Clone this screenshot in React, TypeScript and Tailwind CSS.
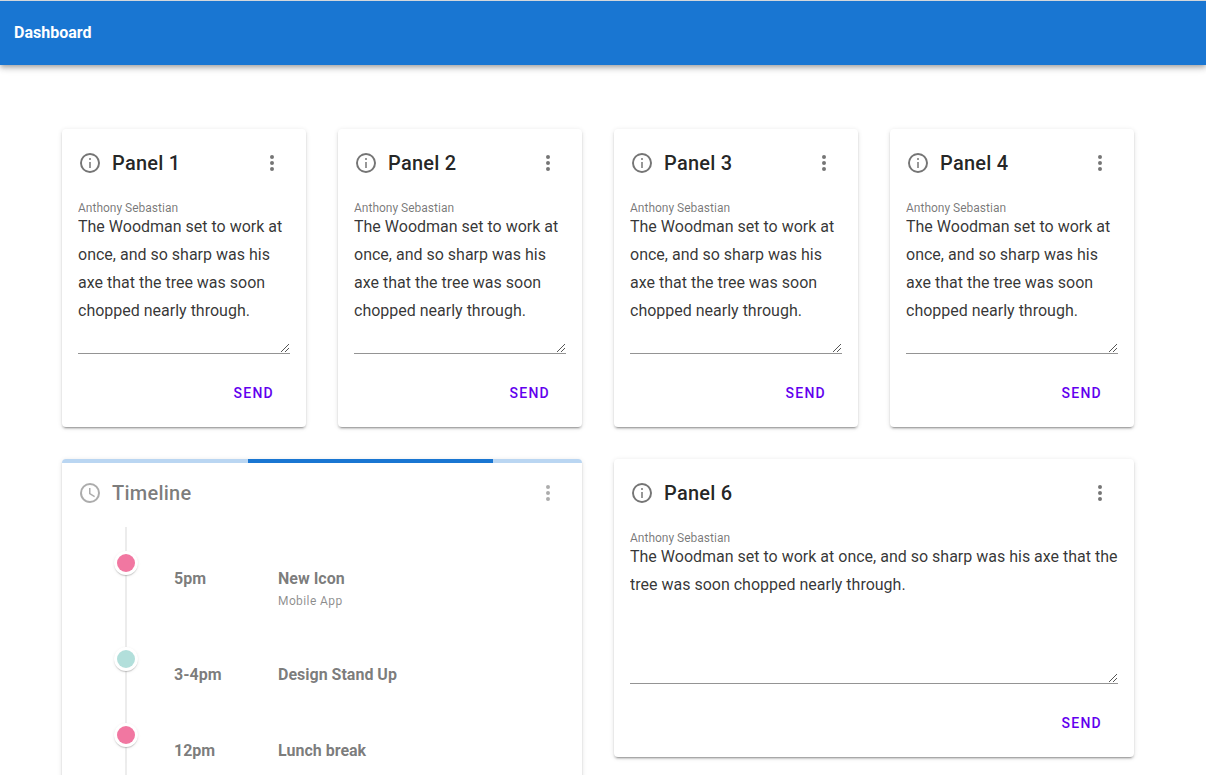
const BODY =
  "The Woodman set to work at once, and so sharp was his axe that the tree was soon chopped nearly through.";

const CARD =
  "rounded bg-white shadow-[0_3px_1px_-2px_rgba(0,0,0,0.2),0_2px_2px_0_rgba(0,0,0,0.14),0_1px_5px_0_rgba(0,0,0,0.12)]";

const RING =
  "M12 20c-4.41 0-8-3.59-8-8s3.59-8 8-8 8 3.59 8 8-3.59 8-8 8m0-18A10 10 0 0 0 2 12a10 10 0 0 0 10 10 10 10 0 0 0 10-10A10 10 0 0 0 12 2z";
const STEM = "M11 7h2v2h-2zM11 11h2v6h-2z";
const CLOCK =
  "M12 20a8 8 0 0 0 8-8 8 8 0 0 0-8-8 8 8 0 0 0-8 8 8 8 0 0 0 8 8m0-18a10 10 0 0 1 10 10 10 10 0 0 1-10 10C6.47 22 2 17.5 2 12A10 10 0 0 1 12 2m.5 5v5.25l4.5 2.67-.75 1.23L11 13V7h1.5z";
const DOTS =
  "M12 16a2 2 0 0 1 2 2 2 2 0 0 1-2 2 2 2 0 0 1-2-2 2 2 0 0 1 2-2m0-6a2 2 0 0 1 2 2 2 2 0 0 1-2 2 2 2 0 0 1-2-2 2 2 0 0 1 2-2m0-6a2 2 0 0 1 2 2 2 2 0 0 1-2 2 2 2 0 0 1-2-2 2 2 0 0 1 2-2z";

function Icon({ d, inner }: { d: string; inner?: string }) {
  return (
    <svg viewBox="0 0 24 24" className="size-6 shrink-0 fill-black/54">
      <path d={d} />
      {inner && <path d={inner} opacity={0.75} />}
    </svg>
  );
}

function Header({ title, icon, inner }: { title: string; icon: string; inner?: string }) {
  return (
    <div className="flex h-8 items-center">
      <Icon d={icon} inner={inner} />
      <h2 className="ml-2.5 flex-1 text-xl font-medium leading-8 tracking-[0.25px] text-black/87">{title}</h2>
      <button aria-label="Menu" className="mr-1.5">
        <Icon d={DOTS} />
      </button>
    </div>
  );
}

function Panel({ title }: { title: string }) {
  return (
    <section className={`${CARD} flex h-[298px] flex-col px-4 pt-[18px]`}>
      <Header title={title} icon={RING} inner={STEM} />
      <label className="mt-[19px] block h-[15px] whitespace-nowrap text-xs leading-5 text-black/54">
        Anthony Sebastian
      </label>
      <div className="relative">
        <textarea
          spellCheck={false}
          defaultValue={BODY}
          className="block h-[141px] w-full resize-none overflow-hidden border-b border-black/42 p-0 text-base leading-7 text-black/80 outline-none"
        />
        <svg viewBox="0 0 8 8" className="pointer-events-none absolute bottom-0.5 right-px size-2" shapeRendering="crispEdges">
          <path
            d="M0 7h1v1h-1zM1 6h1v1h-1zM2 5h1v1h-1zM3 4h1v1h-1zM4 3h1v1h-1zM5 2h1v1h-1zM6 1h1v1h-1zM7 0h1v1h-1zM4 7h1v1h-1zM5 6h1v1h-1zM6 5h1v1h-1zM7 4h1v1h-1z"
            className="fill-[#555555]"
          />
        </svg>
      </div>
      <div className="mt-[21px] flex justify-end pr-4">
        <button className="text-sm font-medium leading-9 tracking-[1.25px] text-[#6200ee]">SEND</button>
      </div>
    </section>
  );
}

function Dot({ color }: { color: string }) {
  return (
    <span className="flex size-6 items-center justify-center rounded-full bg-white shadow-[0_2px_1px_-1px_rgba(0,0,0,0.2),0_1px_1px_0_rgba(0,0,0,0.14),0_1px_3px_0_rgba(0,0,0,0.12)]">
      <span className={`size-[18px] rounded-full ${color}`} />
    </span>
  );
}

const EVENTS = [
  { time: "5pm", title: "New Icon", note: "Mobile App", color: "bg-[#e91e63]", row: "h-24" },
  { time: "3-4pm", title: "Design Stand Up", note: "", color: "bg-[#80cbc4]", row: "h-[76px]" },
  { time: "12pm", title: "Lunch break", note: "", color: "bg-[#e91e63]", row: "h-24" },
];

function Timeline() {
  return (
    <section className={`${CARD} col-span-2 h-[420px] overflow-hidden`}>
      <div className="flex h-1 bg-[#bad6f2]">
        <div className="ml-[186px] w-[245px] bg-[#1976d2]" />
      </div>
      <div className="px-4 pt-3.5 opacity-60">
        <Header title="Timeline" icon={CLOCK} />
        <div className="ml-9 mt-[18px] flex h-6 w-6 justify-center">
          <span className="w-0.5 bg-black/12" />
        </div>
        {EVENTS.map((e) => (
          <div key={e.time} className={`ml-9 flex ${e.row}`}>
            <div className="flex w-6 flex-col items-center">
              <Dot color={e.color} />
              <span className="w-0.5 flex-1 bg-black/12" />
            </div>
            <div className="ml-9 flex pt-4 text-base leading-6 text-black/87">
              <strong className="w-[104px] font-bold">{e.time}</strong>
              <div>
                <strong className="block font-bold">{e.title}</strong>
                {e.note && <p className="text-xs leading-5 tracking-[0.4px] text-black/75">{e.note}</p>}
              </div>
            </div>
          </div>
        ))}
      </div>
    </section>
  );
}

export default function App() {
  return (
    <div className="h-[775px] overflow-hidden bg-white font-['Roboto',sans-serif] antialiased">
      <header className="relative flex h-[65px] items-center border-t border-[#d3d7db] bg-[#1976d2] px-3.5 shadow-[0_2px_4px_-1px_rgba(0,0,0,0.2),0_4px_5px_0_rgba(0,0,0,0.14),0_1px_10px_0_rgba(0,0,0,0.12)]">
        <h1 className="text-base font-bold text-white">Dashboard</h1>
      </header>
      <main className="grid w-[1134px] grid-cols-4 gap-8 pl-[62px] pt-16">
        <Panel title="Panel 1" />
        <Panel title="Panel 2" />
        <Panel title="Panel 3" />
        <Panel title="Panel 4" />
        <Timeline />
        <div className="col-span-2">
          <Panel title="Panel 6" />
        </div>
      </main>
    </div>
  );
}
